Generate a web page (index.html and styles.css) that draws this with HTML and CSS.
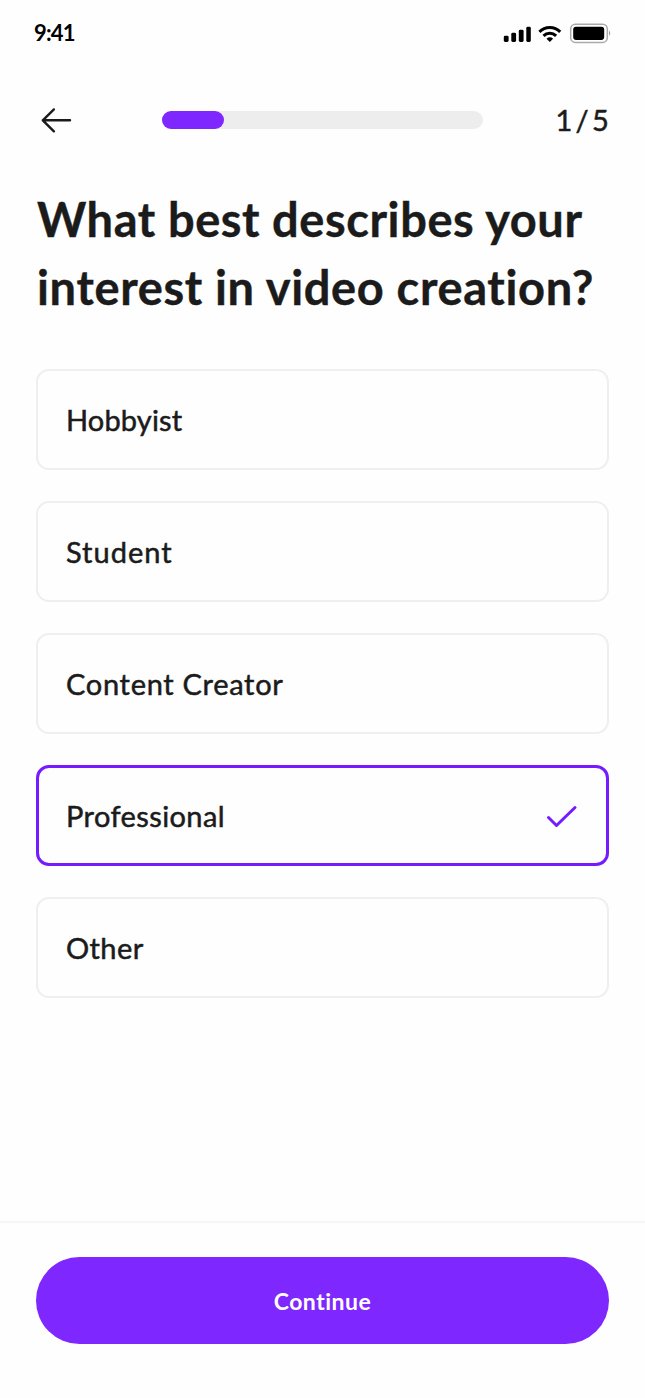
FILE: index.html
```html
<!DOCTYPE html>
<html lang="en">
<head>
<meta charset="utf-8">
<title>Video creation interest</title>
<link rel="stylesheet" href="styles.css">
</head>
<body>
<main class="screen">
  <div class="status">
    <span class="time">9:41</span>
    <svg class="status-icons" width="108" height="24" viewBox="0 0 108 24" aria-hidden="true">
      <rect x="0.8" y="13.7" width="4.8" height="6.3" rx="1.4"/>
      <rect x="8.3" y="10.8" width="4.8" height="9.2" rx="1.4"/>
      <rect x="15.8" y="7.8" width="4.8" height="12.2" rx="1.4"/>
      <rect x="23.3" y="4.8" width="4.5" height="15.2" rx="1.4"/>
      <g fill="none" stroke="#000" stroke-width="3">
        <path d="M36.4 9.9A14.6 14.6 0 0 1 57.2 9.9"/>
        <path d="M40.5 13.9A9 9 0 0 1 53.1 13.9"/>
      </g>
      <path d="M43.5 16.8A5 5 0 0 1 50.1 16.8L46.8 20.1Z"/>
      <rect x="67.7" y="2.2" width="36.6" height="18.2" rx="4.7" fill="#fff" stroke="#aaa" stroke-width="1.5"/>
      <rect x="70.2" y="4.7" width="31" height="13.2" rx="2.8"/>
      <path d="M106 8.6Q108.3 11.3 106 14Z" fill="#999"/>
    </svg>
  </div>
  <header class="nav">
    <svg class="back" width="36" height="30" viewBox="0 0 36 30" fill="none" stroke="#1b1b1b" stroke-width="2.4" stroke-linecap="round" stroke-linejoin="round" aria-label="Back">
      <path d="M34 15.3H6.8M17.9 4.4L6.8 15.3L17.9 26.3"/>
    </svg>
    <div class="progress"><div class="progress-fill"></div></div>
    <span class="step">1 / 5</span>
  </header>
  <h1 class="title"><span class="line line-first">What best describes your</span><span class="line line-second">interest in video creation?</span></h1>
  <div class="options">
    <div class="option"><span class="label hobbyist">Hobbyist</span></div>
    <div class="option"><span class="label student">Student</span></div>
    <div class="option"><span class="label creator">Content Creator</span></div>
    <div class="option selected"><span class="label professional">Professional</span>
      <svg class="check" width="32" height="26" viewBox="0 0 32 26" fill="none" stroke="#761bff" stroke-width="3" stroke-linecap="round" stroke-linejoin="round" aria-hidden="true"><path d="M2.5 14.5L10.5 22.5L29 4.5"/></svg>
    </div>
    <div class="option"><span class="label other">Other</span></div>
  </div>
  <footer class="footer"><button class="continue" type="button"><span>Continue</span></button></footer>
</main>
</body>
</html>
```
FILE: styles.css
```css
* { box-sizing: border-box; }
body { margin: 0; background: #fefefe; color: #1b1b1b; font-family: Lato, "Open Sans", sans-serif; font-variant-ligatures: none; }
.screen { height: 1398px; display: flex; flex-direction: column; }
.status { height: 68px; padding: 2px 34px 0; display: flex; align-items: center; justify-content: space-between; }
.time { font-size: 22px; line-height: 26px; font-weight: 700; letter-spacing: -0.8px; color: #000; margin-bottom: 4px; }
.status-icons { margin-bottom: 2px; }
.nav { height: 104px; padding: 0 37px 0 36px; display: grid; grid-template-columns: 126px 321px 1fr; align-items: center; }
.progress { height: 18px; border-radius: 9px; background: #ededed; }
.progress-fill { width: 62px; height: 18px; border-radius: 9px; background: #7f27ff; }
.step { justify-self: end; font-size: 29px; line-height: 36px; letter-spacing: -0.8px; word-spacing: -2.5px; -webkit-text-stroke: 0.5px; }
.title { margin: 13px 0 0; padding-left: 37px; font-size: 47px; line-height: 68px; font-weight: 700; white-space: nowrap; -webkit-text-stroke: 0.4px; }
.line { display: block; }
.line-first { letter-spacing: 0.58px; }
.line-second { letter-spacing: 0.66px; }
.options { margin: 48px 36px 0; display: flex; flex-direction: column; gap: 31px; }
.option { height: 101px; padding: 0 28px; border: 2px solid #efefef; border-radius: 13px; display: flex; align-items: center; justify-content: space-between; }
.option.selected { border: 3px solid #761bff; padding: 0 28px 0 27px; }
.check { margin-top: 1px; }
.label { font-size: 29px; line-height: 36px; -webkit-text-stroke: 0.5px; }
.hobbyist { letter-spacing: 0.15px; }
.student { letter-spacing: 1px; }
.creator { letter-spacing: 0.7px; }
.professional { letter-spacing: 0.4px; }
.other { letter-spacing: 0.4px; }
.footer { height: 177px; margin-top: auto; border-top: 2px solid #f6f6f6; padding: 34px 36px 0; }
.continue { display: block; width: 100%; height: 87px; padding: 0; border: 0; border-radius: 44px; background: #7f27ff; color: #fff; font: 700 23px/30px Lato, sans-serif; font-variant-ligatures: none; letter-spacing: 0.5px; }
```
